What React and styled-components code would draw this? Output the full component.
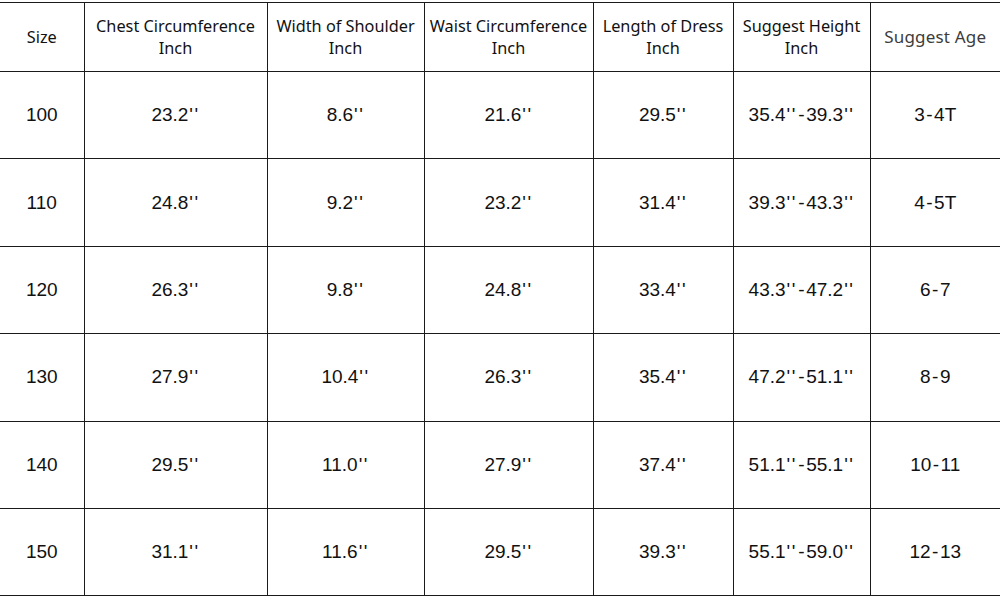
import React from 'react';
import styled, { createGlobalStyle } from 'styled-components';

const GlobalStyle = createGlobalStyle`
	html, body {
		margin: 0;
		padding: 0;
		background: #fff;
	}
	body {
		font-family: 'Liberation Sans', Arial, sans-serif;
		color: #111;
	}
`;

const columns = [
	{ label: 'Size', width: 84 },
	{ label: 'Chest Circumference', unit: 'Inch', width: 183 },
	{ label: 'Width of Shoulder', unit: 'Inch', width: 157 },
	{ label: 'Waist Circumference', unit: 'Inch', width: 169 },
	{ label: 'Length of Dress', unit: 'Inch', width: 140 },
	{ label: 'Suggest Height', unit: 'Inch', width: 137 },
	{ label: 'Suggest Age', width: 130, muted: true },
];

const rows = [
	['100', "23.2''", "8.6''", "21.6''", "29.5''", "35.4''-39.3''", '3-4T'],
	['110', "24.8''", "9.2''", "23.2''", "31.4''", "39.3''-43.3''", '4-5T'],
	['120', "26.3''", "9.8''", "24.8''", "33.4''", "43.3''-47.2''", '6-7'],
	['130', "27.9''", "10.4''", "26.3''", "35.4''", "47.2''-51.1''", '8-9'],
	['140', "29.5''", "11.0''", "27.9''", "37.4''", "51.1''-55.1''", '10-11'],
	['150', "31.1''", "11.6''", "29.5''", "39.3''", "55.1''-59.0''", '12-13'],
];

// the source image uses wider tick marks and dashes than Arial, so space them out a bit
const formatValue = (value) =>
	value.split(/('')|(-)/).filter(Boolean).map((part, i) => {
		if (part === "''") return <Ticks key={i}>''</Ticks>;
		if (part === '-') return <Dash key={i}>-</Dash>;
		return part;
	});

export default function App() {
	return (
		<>
			<GlobalStyle />
			<Page>
				<SizeTable>
					<colgroup>
						{columns.map((col) => (
							<col key={col.label} style={{ width: col.width }} />
						))}
					</colgroup>
					<thead>
						<HeadRow>
							{columns.map((col) => (
								<HeadCell key={col.label} $muted={col.muted}>
									{col.label}
									{col.unit && (
										<>
											<br />
											{col.unit}
										</>
									)}
								</HeadCell>
							))}
						</HeadRow>
					</thead>
					<tbody>
						{rows.map((row) => (
							<BodyRow key={row[0]}>
								{row.map((value, i) => (
									<Cell key={i}>{formatValue(value)}</Cell>
								))}
							</BodyRow>
						))}
					</tbody>
				</SizeTable>
			</Page>
		</>
	);
}

const Page = styled.div`
	width: 1000px;
	height: 598px;
	padding-top: 2px;
	box-sizing: border-box;
	overflow: hidden;
`;

const SizeTable = styled.table`
	width: 1000px;
	table-layout: fixed;
	border-collapse: collapse;
	border-top: 1px solid #1a1a1a;

	td,
	th {
		border-bottom: 1px solid #1a1a1a;
		border-left: 1px solid #1a1a1a;
		padding: 0;
		text-align: center;
		vertical-align: middle;
	}

	td:first-child,
	th:first-child {
		border-left: none;
	}
`;

const HeadRow = styled.tr`
	height: 69px;
`;

const HeadCell = styled.th`
	font-family: 'Noto Sans', 'Noto Sans CJK SC', sans-serif;
	font-weight: 400;
	font-size: ${(p) => (p.$muted ? '17px' : '16.3px')};
	line-height: 22px;
	color: ${(p) => (p.$muted ? '#3c3c3c' : '#111')};
	white-space: nowrap;
	letter-spacing: ${(p) => (p.$muted ? '0.2px' : '0')};
`;

const BodyRow = styled.tr`
	height: 87.4px;
`;

const Cell = styled.td`
	font-family: 'Liberation Sans', Arial, sans-serif;
	font-size: 19px;
	color: #111;
	padding-top: 4px;
	white-space: nowrap;
`;

const Ticks = styled.span`
	letter-spacing: 1.5px;
	padding-left: 1px;
`;

const Dash = styled.span`
	padding: 0 1.5px;
`;
